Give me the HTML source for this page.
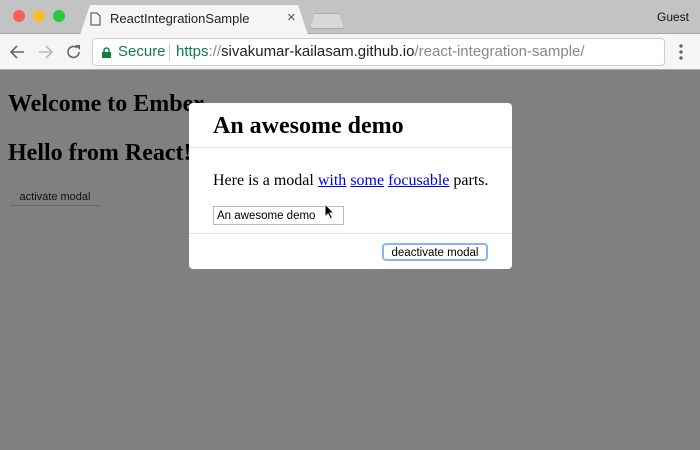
<!DOCTYPE html>
<html><head><style>
*{box-sizing:border-box;margin:0;padding:0}
body{width:700px;height:450px;overflow:hidden;position:relative;background:#808080;font-family:"Liberation Sans",sans-serif}
.tabbar{position:absolute;left:0;top:0;width:700px;height:34px;background:#c3c3c3;border-bottom:1px solid #a8a8a8}
.dot{position:absolute;top:10px;width:12px;height:12px;border-radius:50%}
.tab{position:absolute;left:80px;top:5px;width:228px;height:30px;background:#f5f5f5;clip-path:polygon(0 100%,10px 0,218px 0,228px 100%)}
.tab2{position:absolute;left:310px;top:13px;width:34px;height:16px;background:#d8d8d8;border:1px solid #aaa;clip-path:polygon(0 100%,5px 0,29px 0,34px 100%)}
.toolbar{position:absolute;left:0;top:34px;width:700px;height:36px;background:#f5f5f5;border-bottom:1px solid #aaa}
.omni{position:absolute;left:92px;top:4px;width:573px;height:28px;background:#fff;border:1px solid #ccc;border-radius:4px;font-size:15px;line-height:26px}
.serif{font-family:"Liberation Serif",serif}
h1{position:absolute;left:8px;font:bold 24px "Liberation Serif",serif;color:#000}
.modal{position:absolute;left:189px;top:103px;width:323px;height:166px;background:#fff;border-radius:4px}
a{color:#00e}
</style></head><body>
<div class="tabbar">
<div class="dot" style="left:13px;background:#fc5f57"></div>
<div class="dot" style="left:33px;background:#fdbc2e"></div>
<div class="dot" style="left:53px;background:#28c840"></div>
<div class="tab"></div>
<svg style="position:absolute;left:90px;top:12px" width="11" height="14"><path d="M1 1h6l3 3v9H1z" fill="none" stroke="#444"/></svg>
<div style="position:absolute;left:110px;top:11px;font-size:13px;color:#222">ReactIntegrationSample</div>
<div style="position:absolute;left:287px;top:9px;font-size:15px;color:#555">×</div>
<div class="tab2"></div>
<div style="position:absolute;left:657px;top:10px;font-size:12px;color:#111">Guest</div>
</div>
<div class="toolbar">
<svg style="position:absolute;left:9px;top:10px" width="16" height="16"><path d="M15 8H2M8 2L2 8l6 6" fill="none" stroke="#666" stroke-width="1.6"/></svg>
<svg style="position:absolute;left:38px;top:10px" width="16" height="16"><path d="M1 8h13M8 2l6 6-6 6" fill="none" stroke="#bbb" stroke-width="1.6"/></svg>
<svg style="position:absolute;left:66px;top:10px" width="16" height="16"><path d="M13 8a5.5 5.5 0 1 1-2-4.3" fill="none" stroke="#666" stroke-width="1.6"/><path d="M9 1h5v5z" fill="#666"/></svg>
<div class="omni">
<svg style="position:absolute;left:9px;top:8px" width="9" height="11"><path d="M2 5V3.5a2.5 2.5 0 0 1 5 0V5" fill="none" stroke="#0b8043" stroke-width="1.4"/><rect x="0" y="5" width="9" height="6" fill="#0b8043"/></svg>
<span style="position:absolute;left:25px;color:#0b8043">Secure</span>
<span style="position:absolute;left:76px;top:5px;width:1px;height:17px;background:#ccc"></span>
<span style="position:absolute;left:83px;color:#222"><span style="color:#0b8043">https</span><span style="color:#888">://</span>sivakumar-kailasam.github.io<span style="color:#888">/react-integration-sample/</span></span>
</div>
<svg style="position:absolute;left:679px;top:10px" width="4" height="16"><circle cx="2" cy="2" r="1.7" fill="#666"/><circle cx="2" cy="8" r="1.7" fill="#666"/><circle cx="2" cy="14" r="1.7" fill="#666"/></svg>
</div>
<h1 style="top:91px">Welcome to Ember</h1>
<h1 style="top:140px">Hello from React!</h1>
<div style="position:absolute;left:10px;top:191px;width:90px;height:15px;border-bottom:1px solid #666;font-size:11px;line-height:13px;text-align:center;color:#111">activate modal</div>
<div class="modal">
<div class="serif" style="position:absolute;left:24px;top:10px;font-weight:bold;font-size:24px">An awesome demo</div>
<div style="position:absolute;left:0;top:44px;width:323px;height:1px;background:#e5e5e5"></div>
<div class="serif" style="position:absolute;left:24px;top:69px;font-size:16px">Here is a modal <a href="#">with</a> <a href="#">some</a> <a href="#">focusable</a> parts.</div>
<div style="position:absolute;left:24px;top:103px;width:131px;height:19px;border:1px solid #bbb;font-size:11.5px;line-height:19px;padding-left:3px">An awesome demo</div>
<svg style="position:absolute;left:135px;top:100px" width="12" height="18"><path d="M1 1v13l3-3 2.5 5 2-1-2.5-5h4z" fill="#000" stroke="#fff" stroke-width="1"/></svg>
<div style="position:absolute;left:0;top:130px;width:323px;height:1px;background:#e5e5e5"></div>
<div style="position:absolute;left:193px;top:140px;width:106px;height:18px;border:2px solid #8ab6f0;border-radius:4px;font-size:11.5px;line-height:16px;text-align:center;background:#fff">deactivate modal</div>
</div>
</body></html>
